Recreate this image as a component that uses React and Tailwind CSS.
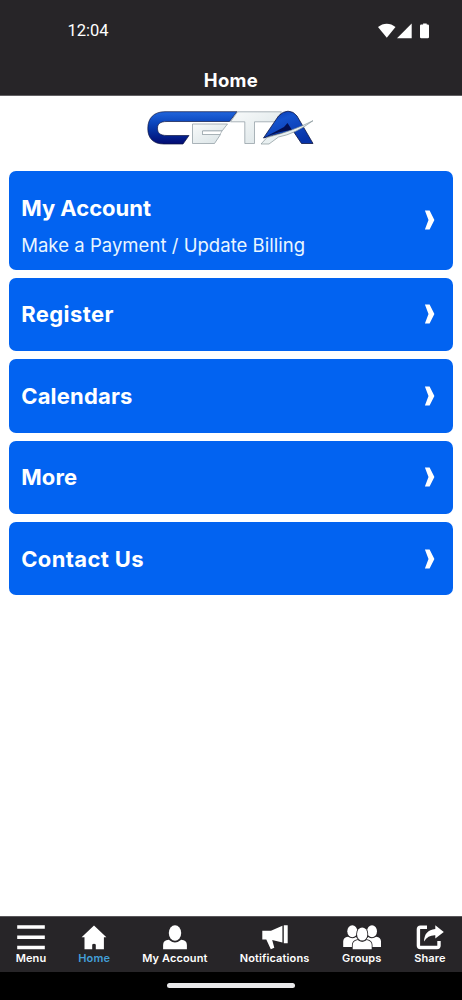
import React from "react";

const cards = [
  { title: "My Account", subtitle: "Make a Payment / Update Billing", height: "h-[98.5px]", tracking: "tracking-[-0.02px]" },
  { title: "Register", height: "h-[73px]", tracking: "tracking-[0.4px]" },
  { title: "Calendars", height: "h-[73.5px]", tracking: "tracking-[0.18px]" },
  { title: "More", height: "h-[73px]", tracking: "tracking-[0.1px]" },
  { title: "Contact Us", height: "h-[73px]", tracking: "tracking-[0.38px]" },
];

function StatusIcons() {
  return (
    <svg width="54" height="17" viewBox="0 0 54 17" fill="white">
      <path d="M0 4.1C5.1-.4 12.4-.4 17.5 4.1L8.8 14.7Z" />
      <path d="M19 15.2L33.7.5V15.2Z" />
      <path d="M45.1.4H48.7V1.6H49.8Q51 1.6 51 2.8V14Q51 15.3 49.8 15.3H43.2Q42 15.3 42 14V2.8Q42 1.6 43.2 1.6H45.1Z" />
    </svg>
  );
}

function Logo() {
  return (
    <svg width="168" height="36" viewBox="0 0 168 36" strokeLinejoin="round">
      <defs>
        <linearGradient id="blue" x1="0" y1="0" x2="0" y2="1">
          <stop offset="0" stopColor="#2165dc" />
          <stop offset=".35" stopColor="#0b46bd" />
          <stop offset=".6" stopColor="#06309f" />
          <stop offset="1" stopColor="#020b72" />
        </linearGradient>
        <linearGradient id="wing" x1="0" y1="0" x2=".6" y2="1">
          <stop offset="0" stopColor="#0430aa" />
          <stop offset=".35" stopColor="#1553cd" />
          <stop offset="1" stopColor="#0733a8" />
        </linearGradient>
        <linearGradient id="silver" x1="0" y1="0" x2="1" y2="1">
          <stop offset="0" stopColor="#f8fafa" />
          <stop offset="1" stopColor="#d8e2e5" />
        </linearGradient>
      </defs>
      <path d="M18 1.7H90L82.5 11.5H20C13 11.5 10.5 14 10.5 18.2C10.5 23 13 25.5 20 25.5H42L36 34H17C6 34 .8 28 .8 18.5C.8 8 7 1.7 18 1.7Z" fill="url(#blue)" stroke="#101742" strokeWidth=".7" />
      <path d="M45.5 14H80.5L75 21H55.5V24.5H73.5L67.5 33.5H45.5Z" fill="url(#silver)" stroke="#89979d" strokeWidth=".7" />
      <path d="M55.5 21H75L73 24.5H55.5Z" fill="white" stroke="#89979d" strokeWidth=".6" />
      <path d="M90.5 1.8H134.5L129 11.8H107.5V33.5H97.8V11.8H83.5Z" fill="url(#silver)" stroke="#89979d" strokeWidth=".7" />
      <path d="M116.5 28L131.5 6Q136 1.2 141 1.2Q146.5 1.2 150 6L166 33.5H154.5L146.5 21.5Q131 23 116.5 28Z" fill="url(#wing)" stroke="#101742" strokeWidth=".8" />
      <path d="M122 25L137 17L140.5 13L145 20Q132 21 116.5 28Z" fill="#030f52" />
      <path d="M114 34L120 27.5Q146 21 166 10.7Q148 24 131.5 27L122 34Z" fill="#e9f0f1" stroke="#87959a" strokeWidth=".7" />
    </svg>
  );
}

function Chevron() {
  return (
    <svg width="11" height="20" viewBox="0 0 11 20" className="shrink-0">
      <path d="M.9.5H5.6L10.4 10L5.6 19.5H.9L4.5 10Z" fill="white" />
    </svg>
  );
}

function MenuIcon() {
  return <svg width="28" height="26" viewBox="0 0 28 26" fill="white"><path d="M.2.3H27.8V3.7H.2ZM.2 10.5H27.8V13.9H.2ZM.2 20.8H27.8V24.2H.2Z" /></svg>;
}

function HomeIcon() {
  return <svg width="26" height="26" viewBox="0 0 26 26" fill="white"><path d="M13 .5L25.4 12.2H22.9V24.3H14.8V19.5Q13 18 11.2 19.5V24.3H3.5V12.2H.6Z" /></svg>;
}

function AccountIcon() {
  return (
    <svg width="26" height="26" viewBox="0 0 26 26" fill="white">
      <ellipse cx="13" cy="8" rx="6.2" ry="7.8" />
      <path d="M1.1 24.3V20Q1.1 15.3 6.8 14.8Q13 20.2 19.2 14.8Q24.9 15.3 24.9 20V24.3Z" />
    </svg>
  );
}

function NotificationIcon() {
  return <svg width="26" height="26" viewBox="0 0 26 26" fill="white"><path d="M.3 5.7H9L20.4.8V17.5L10.2 15L12.3 22.8L8.8 24.2L4.3 14.4H.3ZM21.8.2H25.7V18.2H21.8Z" /></svg>;
}

function GroupsIcon() {
  return (
    <svg width="40" height="26" viewBox="0 0 40 26" fill="white">
      <ellipse cx="10.3" cy="6.2" rx="5" ry="6" />
      <ellipse cx="30" cy="6.2" rx="5" ry="6" />
      <path d="M1.2 22V16.5Q1.2 12.5 6 11.7Q10 14.5 14 12L17 15L12 17L10 22ZM39 22V16.5Q39 12.5 34.2 11.7Q30.2 14.5 26.2 12L23 15L28 17L30.2 22Z" />
      <g stroke="#272528" strokeWidth="1.6" paintOrder="stroke">
        <path d="M10.7 24.3V20Q10.7 16 15.6 15Q20.2 18.5 24.8 15Q29.7 16 29.7 20V24.3Z" />
        <ellipse cx="20.2" cy="9" rx="5.2" ry="6.6" />
      </g>
    </svg>
  );
}

function ShareIcon() {
  return (
    <svg width="28" height="26" viewBox="0 0 28 26" fill="none">
      <path d="M11 2.2H4.4Q2.4 2.2 2.4 4.2V20.5Q2.4 22.5 4.4 22.5H21Q23 22.5 23 20.5V16" stroke="white" strokeWidth="3.4" />
      <path d="M19.3.3L27.8 7L19.3 13.6V10.3Q12 10 8 16.4Q8.3 5.1 19.3 4Z" fill="white" />
    </svg>
  );
}

const tabs = [
  { label: "Menu", Icon: MenuIcon, width: "w-[30px]" },
  { label: "Home", Icon: HomeIcon, width: "w-[32px]", active: true },
  { label: "My Account", Icon: AccountIcon, width: "w-[65px]" },
  { label: "Notifications", Icon: NotificationIcon, width: "w-[70px]" },
  { label: "Groups", Icon: GroupsIcon, width: "w-[40px]" },
  { label: "Share", Icon: ShareIcon, width: "w-[32px]" },
];

export default function App() {
  return (
    <div className="flex h-[1000px] w-[462px] flex-col overflow-hidden bg-white font-['Inter',sans-serif] text-white">
      <header className="h-24 shrink-0 border-b border-[#626063] bg-[#272528]">
        <div className="flex h-[62px] items-center justify-between pr-[30px] pl-[67.5px]">
          <span className="font-['Roboto',sans-serif] text-[16.5px] leading-5">12:04</span>
          <StatusIcons />
        </div>
        <h1 className="pt-[6px] text-center text-[18.5px] leading-6 font-bold tracking-[0.35px]">Home</h1>
      </header>
      <main className="flex min-h-0 flex-1 flex-col">
        <div className="flex h-[75px] shrink-0 justify-center pt-[14px]"><Logo /></div>
        <div className="flex flex-col gap-[8.3px] pr-[9.3px] pl-[9.2px]">
          {cards.map(({ title, subtitle, height, tracking }) => (
            <button key={title} className={`${height} flex items-center justify-between rounded-[7px] bg-[#0263f1] pr-[17.3px] pl-3 text-left`}>
              <span className="block">
                <span className={`${tracking} block text-[22px] leading-7 font-bold`}>{title}</span>
                {subtitle && <span className="mt-[11px] -mb-[10px] block text-[18.5px] leading-6 tracking-[0.04px] text-[#e9f6ff]">{subtitle}</span>}
              </span>
              <Chevron />
            </button>
          ))}
        </div>
      </main>
      <nav className="flex h-14 shrink-0 justify-between border-t border-[#59575a] bg-[#272528] px-4">
        {tabs.map(({ label, Icon, width, active }) => (
          <button key={label} className={`${width} flex flex-col items-center pt-2`}>
            <span className="flex h-[26px] shrink-0 justify-center"><Icon /></span>
            <span className={`text-[11px] leading-[15px] font-semibold tracking-[0.12px] whitespace-nowrap ${active ? "text-[#439fd8]" : "text-white"}`}>{label}</span>
          </button>
        ))}
      </nav>
      <footer className="flex h-7 shrink-0 justify-center bg-black pt-[11px]">
        <div className="h-[5px] w-32 rounded-full bg-[#e8e8ea]" />
      </footer>
    </div>
  );
}
